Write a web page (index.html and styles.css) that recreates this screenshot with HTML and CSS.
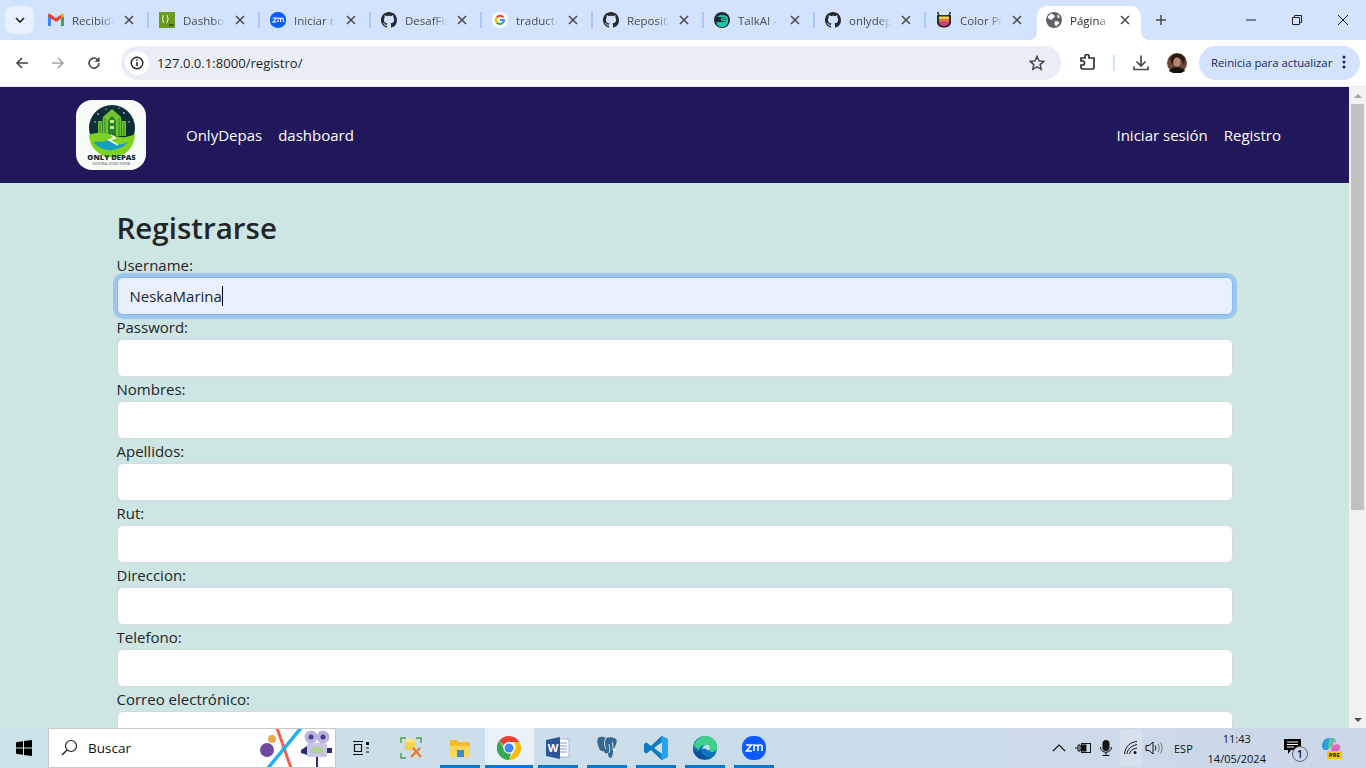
FILE: index.html
```html
<!DOCTYPE html>
<html lang="es">
<head>
  <meta charset="UTF-8" />
  <title>Registro - OnlyDepas</title>
  <link rel="stylesheet" href="styles.css">
</head>
<body>
  <svg class="defs" width="0" height="0">
    <symbol id="github" viewBox="0 0 16 16"><path fill="#24292f" d="M8 0C3.58 0 0 3.58 0 8c0 3.54 2.29 6.53 5.47 7.59.4.07.55-.17.55-.38 0-.19-.01-.82-.01-1.49-2.01.37-2.53-.49-2.69-.94-.09-.23-.48-.94-.82-1.13-.28-.15-.68-.52-.01-.53.63-.01 1.08.58 1.23.82.72 1.21 1.87.87 2.33.66.07-.52.28-.87.51-1.07-1.78-.2-3.64-.89-3.64-3.95 0-.87.31-1.59.82-2.15-.08-.2-.36-1.02.08-2.12 0 0 .67-.21 2.2.82.64-.18 1.32-.27 2-.27s1.36.09 2 .27c1.53-1.04 2.2-.82 2.2-.82.44 1.1.16 1.92.08 2.12.51.56.82 1.27.82 2.15 0 3.07-1.87 3.75-3.65 3.95.29.25.54.73.54 1.48 0 1.07-.01 1.93-.01 2.2 0 .21.15.46.55.38A8.01 8.01 0 0 0 16 8c0-4.42-3.58-8-8-8z"/></symbol>
    <symbol id="close" viewBox="0 0 10 10"><path d="M1 1l8 8M9 1L1 9" stroke="#474747" stroke-width="1.5" fill="none"/></symbol>
    <symbol id="zoom" viewBox="0 0 24 24"><rect width="24" height="24" rx="11" fill="#0b5cff"/><path d="M4 9h5.5L4.5 15H10M12 15v-6h.5M12.5 10.5c0-2 3.5-2 3.5 0V15M16 10.5c0-2 4-2 4 0V15" stroke="#fff" stroke-width="1.6" fill="none"/></symbol>
  </svg>

  <div class="tabstrip">
    <button class="tab-search"><svg width="10" height="6" viewBox="0 0 10 6"><path d="M1 1l4 4 4-4" stroke="#1f1f1f" stroke-width="1.6" fill="none"/></svg></button>

    <div class="tab">
      <svg class="favicon" viewBox="0 0 16 16"><path d="M0 3.5V14h3V6z" fill="#4285f4"/><path d="M16 3.5V14h-3V6z" fill="#34a853"/><path d="M0 2.500v2L8 10l8-5.500v-2L14.500 1.500 8 6 1.500 1.500z" fill="#ea4335"/><path d="M13 6l3-1.500v-2L14.500 1.500 13 2.600z" fill="#fbbc04"/></svg>
      <span class="tab-title">Recibidos</span>
      <svg class="tab-close"><use href="#close"/></svg>
    </div>
    <div class="tab">
      <svg class="favicon" viewBox="0 0 16 16"><rect width="16" height="16" fill="#6a9a23"/><path d="M6.500 4C5 4 6 8 4.500 8 6 8 5 12 6.500 12M9 4c1.500 0 .5 4 2 4-1.500 0-.5 4-2 4" stroke="#fff" stroke-width="1" fill="none" transform="translate(-1.500 -1)"/><path d="M10 13h4.500" stroke="#222" stroke-width="1.200"/></svg>
      <span class="tab-title">Dashboard</span>
      <svg class="tab-close"><use href="#close"/></svg>
    </div>
    <div class="tab">
      <svg class="favicon"><use href="#zoom"/></svg>
      <span class="tab-title">Iniciar reunión</span>
      <svg class="tab-close"><use href="#close"/></svg>
    </div>
    <div class="tab">
      <svg class="favicon"><use href="#github"/></svg>
      <span class="tab-title">DesafFinal</span>
      <svg class="tab-close"><use href="#close"/></svg>
    </div>
    <div class="tab">
      <svg class="favicon" viewBox="0 0 16 16"><circle cx="8" cy="8" r="8" fill="#fff"/><path d="M12.300 5A5 5 0 0 0 4 4.800L5.600 6.200A3 3 0 0 1 10.600 6z" fill="#ea4335"/><path d="M4 4.800a5 5 0 0 0 0 6.400l1.600-1.400a3 3 0 0 1 0-3.600z" fill="#fbbc04"/><path d="M4 11.200a5 5 0 0 0 7.300.5L9.800 10.300a3 3 0 0 1-4.200-.5z" fill="#34a853"/><path d="M13 7H8v2h2.800a2.500 2.500 0 0 1-1 1.300l1.500 1.400A5 5 0 0 0 13 7z" fill="#4285f4"/></svg>
      <span class="tab-title">traductor</span>
      <svg class="tab-close"><use href="#close"/></svg>
    </div>
    <div class="tab">
      <svg class="favicon"><use href="#github"/></svg>
      <span class="tab-title">Repositorio</span>
      <svg class="tab-close"><use href="#close"/></svg>
    </div>
    <div class="tab">
      <svg class="favicon" viewBox="0 0 16 16"><circle cx="8" cy="8" r="8" fill="#1c2b33"/><path d="M2 8c0-3 3-5 6-5s6 1 6 4v3c0 3-3 5-6 5-2 0-5-1-5-3z" fill="#19c9a8"/><rect x="1" y="5" width="11" height="5" rx="2" fill="#1c2b33"/><rect x="7" y="5.500" width="6" height="3.500" rx="1" fill="#19c9a8"/><circle cx="9" cy="7.200" r=".7" fill="#1c2b33"/><circle cx="11.300" cy="7.200" r=".7" fill="#1c2b33"/></svg>
      <span class="tab-title">TalkAI - Chat</span>
      <svg class="tab-close"><use href="#close"/></svg>
    </div>
    <div class="tab">
      <svg class="favicon"><use href="#github"/></svg>
      <span class="tab-title">onlydepas</span>
      <svg class="tab-close"><use href="#close"/></svg>
    </div>
    <div class="tab tab-narrow">
      <svg class="favicon" viewBox="0 0 16 16"><path d="M1.500 0l1.500 3M14.500 0L13 3" stroke="#2b2b2b" stroke-width="1.500"/><path d="M1 3h14v7c0 4-3 5.500-7 5.500S1 14 1 10z" fill="#2b2b2b"/><rect x="3" y="4.500" width="10" height="3" fill="#f7d23e"/><rect x="3" y="7.500" width="10" height="3" fill="#f2665a"/><path d="M3 10.500h10c0 2-2 3.500-5 3.500s-5-1.500-5-3.500z" fill="#d63a8a"/></svg>
      <span class="tab-title">Color Picker</span>
      <svg class="tab-close"><use href="#close"/></svg>
    </div>
    <div class="tab tab-active">
      <svg class="favicon" viewBox="0 0 16 16"><circle cx="8" cy="8" r="8" fill="#5f6368"/><path d="M5 1.500l3 1.500 1 2-2 1-1 2-3-1-1.500-2zM9 9l3.500.5.500 2-3 3-1.500-2.500zM12 2.500l2 3-2 .500-1-2z" fill="#fff"/></svg>
      <span class="tab-title">Página de registro</span>
      <svg class="tab-close"><use href="#close"/></svg>
    </div>
    <svg class="new-tab" width="12" height="12" viewBox="0 0 12 12"><path d="M6 1v10M1 6h10" stroke="#474747" stroke-width="1.500"/></svg>

    <div class="window-controls">
      <svg width="12" height="12" viewBox="0 0 12 12"><path d="M1 6h10" stroke="#1f1f1f"/></svg>
      <svg width="12" height="12" viewBox="0 0 12 12"><path d="M1.500 3.500h7v7h-7zM3.500 3.500v-2h7v7h-2" stroke="#1f1f1f" fill="none"/></svg>
      <svg width="12" height="12" viewBox="0 0 12 12"><path d="M1 1l10 10M11 1L1 11" stroke="#1f1f1f"/></svg>
    </div>
  </div>

  <div class="toolbar">
    <svg class="tool-icon" viewBox="0 0 16 16"><path d="M14 8H3M8 3L3 8l5 5" stroke="#474747" stroke-width="1.600" fill="none"/></svg>
    <svg class="tool-icon" viewBox="0 0 16 16"><path d="M2 8h11M8 3l5 5-5 5" stroke="#a3a6ab" stroke-width="1.600" fill="none"/></svg>
    <svg class="tool-icon" viewBox="0 0 16 16"><path d="M13 8a5 5 0 1 1-1.500-3.500L13 6" stroke="#474747" stroke-width="1.600" fill="none"/><path d="M13.500 1.800v5h-5z" fill="#474747"/></svg>
    <div class="omnibox">
      <span class="site-info"><svg width="14" height="14" viewBox="0 0 14 14"><circle cx="7" cy="7" r="5.800" stroke="#1f1f1f" stroke-width="1.400" fill="none"/><path d="M7 6v4.200" stroke="#1f1f1f" stroke-width="1.500"/><circle cx="7" cy="4.100" r=".9" fill="#1f1f1f"/></svg></span>
      <span class="url">127.0.0.1:8000/registro/</span>
      <svg class="star" width="16" height="16" viewBox="0 0 16 16"><path d="M8 1.500l2 4.400 4.700.5-3.500 3.200 1 4.700L8 11.900l-4.200 2.400 1-4.700L1.300 6.400 6 5.900z" stroke="#474747" stroke-width="1.500" fill="none"/></svg>
    </div>
    <svg class="ext-icon" width="18" height="18" viewBox="0 0 18 18"><path d="M2 5h4V3.500a2 2 0 0 1 4 0V5h5v9.500a1.500 1.500 0 0 1-1.500 1.500H3.500A1.500 1.500 0 0 1 2 14.500V12h1.500a2 2 0 0 0 0-4H2z" stroke="#303030" stroke-width="1.700" fill="none" transform="translate(0 -1)"/></svg>
    <span class="tool-sep"></span>
    <svg class="dl-icon" width="18" height="18" viewBox="0 0 18 18"><path d="M9 1.500v10M4.500 7.500L9 12l4.500-4.500M2 12.500v3h14v-3" stroke="#474747" stroke-width="1.700" fill="none"/></svg>
    <svg class="avatar" width="20" height="20" viewBox="0 0 20 20"><circle cx="10" cy="10" r="10" fill="#6b4a3a"/><path d="M3 5l4-4h7l4 4-1 7-3-6H7l-2 6z" fill="#2a1a14"/><ellipse cx="10" cy="9" rx="3.500" ry="4.500" fill="#b98468"/><path d="M2 18c2-5 14-5 16 0l-4 2H6z" fill="#17110f"/></svg>
    <div class="update-pill">
      <span>Reinicia para actualizar</span>
      <svg width="4" height="14" viewBox="0 0 4 14"><circle cx="2" cy="2" r="1.500" fill="#0b2a57"/><circle cx="2" cy="7" r="1.500" fill="#0b2a57"/><circle cx="2" cy="12" r="1.500" fill="#0b2a57"/></svg>
    </div>
  </div>

  <div class="viewport">
    <div class="page">
      <nav class="navbar">
        <svg class="logo" width="70" height="70" viewBox="0 0 70 70">
          <circle cx="36" cy="28" r="23" fill="#0d2f35"/>
          <circle cx="22" cy="14" r=".8" fill="#fff"/><circle cx="48" cy="13" r=".8" fill="#fff"/><circle cx="53" cy="22" r=".7" fill="#fff"/><circle cx="19" cy="22" r=".7" fill="#fff"/><circle cx="30" cy="9" r=".6" fill="#fff"/><circle cx="43" cy="8" r=".6" fill="#fff"/>
          <path d="M22 36V21h5v-4l9-8 9 8v4h5v15z" fill="#6fc52b"/>
          <path d="M32 36V20l4-4 4 4v16z" fill="#2a7d35"/>
          <path d="M24 22v14M26.500 19v17M29 18v18M43 18v18M45.500 19v17M48 22v14" stroke="#1f6a2d" stroke-width=".8"/>
          <path d="M34 20h4v3h-4zM34 26h4v3h-4z" fill="#c8f06a"/>
          <path d="M13 35c7-3 15-3 23 0s15 3 23-1a23 23 0 0 1-46 1z" fill="#7ed321"/>
          <path d="M17 42c7 0 13-1 18-2l4 4c5 1 10 0 14-3a23 23 0 0 1-36 1z" fill="#16a0c0"/>
          <path d="M35 35l4 3-6 2 9 5" stroke="#fff" stroke-width="1.500" fill="none"/>
          <text class="logo-title" x="35.500" y="60">ONLY DEPAS</text>
          <text class="logo-sub" x="35.500" y="64.500">YOUR REAL ESTATE PORTAL</text>
        </svg>
        <ul class="nav-links">
          <li><a href="#">OnlyDepas</a></li>
          <li><a href="#">dashboard</a></li>
        </ul>
        <ul class="nav-links nav-right">
          <li><a href="#">Iniciar sesión</a></li>
          <li><a href="#">Registro</a></li>
        </ul>
      </nav>

      <main class="container">
        <h2>Registrarse</h2>
        <form>
          <label>Username:</label>
          <div class="form-control autofilled"><span>NeskaMarina</span><i class="caret"></i></div>
          <label for="password">Password:</label>
          <input class="form-control" id="password" type="password">
          <label for="nombres">Nombres:</label>
          <input class="form-control" id="nombres" type="text">
          <label for="apellidos">Apellidos:</label>
          <input class="form-control" id="apellidos" type="text">
          <label for="rut">Rut:</label>
          <input class="form-control" id="rut" type="text">
          <label for="direccion">Direccion:</label>
          <input class="form-control" id="direccion" type="text">
          <label for="telefono">Telefono:</label>
          <input class="form-control" id="telefono" type="text">
          <label for="correo">Correo electrónico:</label>
          <input class="form-control" id="correo" type="email">
        </form>
      </main>
    </div>

    <div class="scrollbar">
      <span class="arrow arrow-up"></span>
      <div class="scroll-track"><div class="scroll-thumb"></div></div>
      <span class="arrow arrow-down"></span>
    </div>
  </div>

  <div class="taskbar">
    <svg class="win-logo" width="16" height="16" viewBox="0 0 16 16"><path d="M0 2.200l7-1v6.400H0zM8 1l8-1v7.600H8zM0 8.400h7v6.400l-7-1zM8 8.400h8V16l-8-1.100z" fill="#000"/></svg>
    <div class="search-box">
      <svg width="18" height="18" viewBox="0 0 18 18"><circle cx="11" cy="7" r="5.500" stroke="#1f1f1f" stroke-width="1.200" fill="none"/><path d="M7 11l-5 5" stroke="#1f1f1f" stroke-width="1.400"/></svg>
      <span>Buscar</span>
      <svg class="search-art" width="75" height="40" viewBox="0 0 75 40">
        <circle cx="7" cy="22" r="7" fill="#6d4a9e"/><circle cx="12" cy="11" r="4" fill="#e9a94b"/>
        <path d="M17 0l14 40" stroke="#f0604d" stroke-width="3"/><path d="M41 0L8 40" stroke="#1fb0ee" stroke-width="3.500"/>
        <g transform="translate(6 0)">
          <circle cx="45" cy="9" r="6.500" fill="#b9b4dc"/><circle cx="57" cy="9" r="6.500" fill="#b9b4dc"/>
          <circle cx="45" cy="9" r="2.500" fill="#3f3f8f"/><circle cx="57" cy="9" r="2.500" fill="#3f3f8f"/>
          <rect x="41" y="15" width="20" height="14" rx="2" fill="#c9c5e6"/><rect x="45" y="19" width="12" height="6" fill="#a9d39a"/>
          <path d="M41 18l-6 4v3l6 2zM61 20h5v5h-5z" fill="#2c2c6e"/><path d="M51 29v11" stroke="#2c2c6e" stroke-width="2"/>
        </g>
      </svg>
    </div>

    <div class="task-slot task-view"><svg width="18" height="18" viewBox="0 0 18 18"><path d="M2 2.500h10M2 15.500h10M3.500 5.500h7v7h-7zM15 9h3M15 13h3" stroke="#111" stroke-width="1.200" fill="none"/><rect x="15" y="3" width="3" height="3" fill="#111"/></svg></div>
    <div class="task-slot"><svg width="24" height="24" viewBox="0 0 24 24"><path d="M2 7V2h5M22 7V2h-5M2 17v5h5" stroke="#4ba34b" stroke-width="1.500" fill="none"/><path d="M6 4h10v10H6z" fill="#f4d24c"/><ellipse cx="11" cy="4.500" rx="5" ry="2" fill="#f9e58d"/><path d="M12 21l9-9M14 12l8 9" stroke="#ec7a25" stroke-width="2.400"/></svg></div>
    <div class="task-slot is-open"><svg width="22" height="20" viewBox="0 0 22 20"><path d="M1 3a1 1 0 0 1 1-1h6l2 2h10a1 1 0 0 1 1 1v13a1 1 0 0 1-1 1H2a1 1 0 0 1-1-1z" fill="#f5b92e"/><path d="M1 8h20v10a1 1 0 0 1-1 1H2a1 1 0 0 1-1-1z" fill="#fbd75b"/><path d="M8 12h7v7H8z" fill="#2f8ed4"/></svg></div>
    <div class="task-slot is-open is-active"><svg width="24" height="24" viewBox="0 0 24 24"><path d="M12 0a12 12 0 0 1 10.400 6H12a6 6 0 0 0-5.600 3.800L2.500 4.500A12 12 0 0 1 12 0z" fill="#ea4335"/><path d="M22.400 6a12 12 0 0 1-10.400 18l5.200-9a6 6 0 0 0-.700-9z" fill="#fbbc04"/><path d="M12 24A12 12 0 0 1 2.500 4.500l4.900 9a6 6 0 0 0 6.800 3.700z" fill="#34a853"/><circle cx="12" cy="12" r="5.600" fill="#fff"/><circle cx="12" cy="12" r="4.500" fill="#4285f4"/></svg></div>
    <div class="task-slot is-open"><svg width="24" height="22" viewBox="0 0 24 22"><rect x="8" y="2" width="15" height="18" fill="#fff" stroke="#9db4d6"/><path d="M13 6h8M13 9h8M13 12h8M13 15h8" stroke="#7f99c4"/><path d="M0 3l14-3v22L0 19z" fill="#2b579a"/><text class="word-w" x="7" y="14.500">W</text></svg></div>
    <div class="task-slot is-open"><svg width="24" height="24" viewBox="0 0 24 24"><path d="M3 2c3-2 6-1 8 0 3-1 7-1 10 1 2 3-1 8-3 11 0 3 0 6-2 8-2 0-3-2-3-5-2 1-4 0-4-2-3 1-5-2-6-6C2 6 2 4 3 2z" fill="#336791"/><path d="M11 2c-2 3-2 7 0 11M14 8c1 4 1 6 0 9M18 14c2 0 3 0 3-1M17 6c1 2 1 5 1 8" stroke="#fff" stroke-width=".8" fill="none"/></svg></div>
    <div class="task-slot is-open"><svg width="24" height="24" viewBox="0 0 24 24"><path d="M17.500 0L24 3v18l-6.500 3L7 14l-4.500 3.500L0 16V8l2.500-1.500L7 10z" fill="#0a7ac4"/><path d="M17.500 0L24 3v18l-6.500 3V0z" fill="#27a4ee"/><path d="M18 6L10 12l8 6z" fill="#cbe0ea"/></svg></div>
    <div class="task-slot is-open"><svg width="24" height="24" viewBox="0 0 24 24"><circle cx="12" cy="12" r="12" fill="#0f76bd"/><path d="M1 10C3 2 9 0 13 0c6 0 11 5 11 11 0 3-2 5-5 5-2 0-3-1-3-2 1-2 0-5-4-5-4 0-6 3-6 5L1 10z" fill="#3fd08a"/><path d="M8 14c0 4 4 7 8 7 3 0 5-1 7-4-3 3-8 6-13 6C4 23 0 18 0 12c1 2 3 5 8 2z" fill="#124f9c"/><path d="M9.500 13c0-3 2-4 4-4 3 0 4 2 3 4.500-2 1.500-3 .5-3-.5-2-1-3 0-4 0z" fill="#cde2ea"/></svg></div>
    <div class="task-slot is-open"><svg width="24" height="24"><use href="#zoom"/></svg></div>

    <div class="tray">
      <svg class="tray-chevron" width="14" height="8" viewBox="0 0 14 8"><path d="M1 7l6-6 6 6" stroke="#111" stroke-width="1.200" fill="none"/></svg>
      <svg class="tray-battery" width="16" height="12" viewBox="0 0 16 12"><path d="M0 6h3M3 3h2v6H3zM5 4h1M5 8h1" stroke="#111" fill="none"/><rect x="6.500" y="1.500" width="9" height="9" fill="none" stroke="#111"/><rect x="6.500" y="2.500" width="5" height="7" fill="#111"/></svg>
      <svg class="tray-mic" width="12" height="16" viewBox="0 0 12 16"><rect x="2.500" y="0" width="7" height="11" rx="3.500" fill="#111"/><path d="M.5 7c0 7 11 7 11 0M6 12v3M2.500 15.500h7" stroke="#111" fill="none"/></svg>
      <span class="tray-wifi"><svg width="14" height="14" viewBox="0 0 14 14"><path d="M.500 13C1 6 6 1 13 .5M3 13c.500-5 4-8 10-9.500M5.500 13c.500-3 3-5 7.500-6" stroke="#111" fill="none"/><circle cx="11" cy="11.500" r="1.500" fill="#111"/></svg></span>
      <svg class="tray-volume" width="18" height="14" viewBox="0 0 18 14"><path d="M1 4.500h3L8 1v12L4 9.500H1z" stroke="#111" fill="none"/><path d="M10 4.500c1 1.500 1 3.500 0 5" stroke="#111" fill="none"/><path d="M13 3c1.500 2.500 1.500 5.500 0 8M15.500 1.500c2 3 2 8 0 11" stroke="#777" fill="none"/></svg>
      <span class="tray-lang">ESP</span>
      <div class="clock"><span>11:43</span><span>14/05/2024</span></div>
      <div class="notif">
        <svg width="17" height="15" viewBox="0 0 17 15"><path d="M0 0h17v11H7l-3 4v-4H0z" fill="#000"/><path d="M3 3h11M3 5.500h11M3 8h7" stroke="#fff"/></svg>
        <span class="notif-badge">1</span>
      </div>
      <div class="copilot">
        <svg width="20" height="18" viewBox="0 0 20 18"><path d="M1 9c0-5 3-8 7-8h5l-3 5-3 7H4c-2 0-3-2-3-4z" fill="#2d9fe0"/><path d="M8 1h4c2 0 3 2 3 4l-5 5-3 3z" fill="#57c6a6"/><path d="M11 7h6c2 1 3 3 2 5l-3 3h-6z" fill="#d867c7"/><path d="M12 5l3 0 2 2-5 2z" fill="#f4a6d8"/></svg>
        <span class="pre-tag">PRE</span>
      </div>
    </div>
  </div>
</body>
</html>
```

FILE: styles.css
```css
:root {
  --ui-font: "Open Sans", "Noto Sans", Arial, sans-serif;
  --strip-bg: #d3e3fd;
  --navbar-bg: #21175b;
  --page-bg: #cee6e3;
}

* {
  box-sizing: border-box;
}

html, body {
  height: 100%;
}

body {
  margin: 0;
  display: flex;
  flex-direction: column;
  overflow: hidden;
  font-family: var(--ui-font);
  color: #212529;
  background-color: #fff;
}

.defs {
  position: absolute;
}

/* tabs */
.tabstrip {
  height: 40px;
  flex: none;
  display: flex;
  background-color: var(--strip-bg);
  font-size: 11.5px;
  color: #474b50;
}

.tab-search {
  width: 29px;
  height: 28px;
  margin: 6px 3px 0 5px;
  padding: 0;
  border: none;
  border-radius: 8px;
  background-color: #e8f0fd;
  display: flex;
  align-items: center;
  justify-content: center;
}

.tab {
  position: relative;
  width: 111px;
  height: 34px;
  margin-top: 6px;
  padding: 0 0 6px 11px;
  display: flex;
  align-items: center;
  flex: none;
}

.tab::after {
  content: "";
  position: absolute;
  right: -1px;
  top: 6px;
  width: 2px;
  height: 16px;
  background-color: #a8c7fa;
}

.tab-narrow::after {
  display: none;
}

.favicon {
  width: 16px;
  height: 16px;
  flex: none;
}

.tab-title {
  width: 42px;
  margin-left: 8px;
  overflow: hidden;
  white-space: nowrap;
  -webkit-mask-image: linear-gradient(to right, #000 70%, transparent);
  mask-image: linear-gradient(to right, #000 70%, transparent);
}

.tab-close {
  width: 10px;
  height: 10px;
  margin-left: 10px;
  flex: none;
}

.tab-active {
  width: 104px;
  margin-left: 1px;
  padding-left: 9px;
  background-color: #fff;
  border-radius: 10px 10px 0 0;
  color: #2b2b2b;
}

/* the little curves where the active tab meets the toolbar */
.tab-active::before,
.tab-active::after {
  content: "";
  position: absolute;
  top: auto;
  bottom: 0;
  width: 8px;
  height: 8px;
  background-color: transparent;
}

.tab-active::before {
  left: -8px;
  border-bottom-right-radius: 8px;
  box-shadow: 2px 2px 0 2px #fff;
}

.tab-active::after {
  right: -8px;
  border-bottom-left-radius: 8px;
  box-shadow: -2px 2px 0 2px #fff;
}

.tab-active .tab-title {
  width: 40px;
}

.new-tab {
  flex: none;
  margin: 14px 0 0 14px;
}

.window-controls {
  margin-left: auto;
  width: 138px;
  display: flex;
  justify-content: space-between;
  padding: 14px 17px 0;
}

/* toolbar */
.toolbar {
  height: 47px;
  flex: none;
  display: flex;
  align-items: flex-start;
  padding: 6px 0 0 14px;
  background-color: #fff;
  border-bottom: 1px solid #e6e6e6;
}

.tool-icon {
  width: 16px;
  height: 16px;
  margin: 9px 20px 0 0;
  flex: none;
}

.omnibox {
  width: 940px;
  height: 34px;
  margin-left: -1px;
  display: flex;
  align-items: center;
  padding: 0 16px 0 4px;
  border-radius: 17px;
  background-color: #e9eef6;
  font-size: 13.1px;
}

.site-info {
  width: 24px;
  height: 24px;
  border-radius: 50%;
  background-color: #fff;
  display: flex;
  align-items: center;
  justify-content: center;
}

.url {
  margin-left: 8px;
  color: #1f1f1f;
}

.star {
  margin-left: auto;
}

.ext-icon {
  margin: 8px 0 0 18px;
}

.tool-sep {
  width: 2px;
  height: 16px;
  margin: 9px 0 0 16px;
  background-color: #d3e3fd;
}

.dl-icon {
  margin: 8px 0 0 17px;
}

.avatar {
  margin: 7px 0 0 17px;
}

.update-pill {
  width: 161px;
  height: 34px;
  margin-left: 12px;
  padding: 0 14px 2px 12px;
  display: flex;
  align-items: center;
  justify-content: space-between;
  border-radius: 17px;
  background-color: var(--strip-bg);
  color: #0b2a57;
  font-size: 11.3px;
  white-space: nowrap;
}

/* page */
.viewport {
  flex: 1;
  min-height: 0;
  display: flex;
}

.page {
  flex: 1;
  min-width: 0;
  overflow: hidden;
  background-color: var(--page-bg);
}

.navbar {
  height: 96px;
  display: flex;
  align-items: center;
  padding: 0 68px 0 76px;
  background-color: var(--navbar-bg);
}

.logo {
  flex: none;
  border-radius: 16px;
  background-color: #f6fbf8;
}

.logo-title {
  font-family: "Open Sans", Arial, sans-serif;
  font-size: 7.600px;
  font-weight: 800;
  text-anchor: middle;
  fill: #14272e;
}

.logo-sub {
  font-family: "Open Sans", Arial, sans-serif;
  font-size: 3px;
  text-anchor: middle;
  fill: #3b4a50;
}

.word-w {
  font-family: "Open Sans", Arial, sans-serif;
  font-size: 11px;
  font-weight: 700;
  text-anchor: middle;
  fill: #fff;
}

.nav-links {
  display: flex;
  gap: 16px;
  margin: 0 0 0 40px;
  padding: 0;
  list-style: none;
  font-size: 15px;
}

.nav-links a {
  color: #fff;
  text-decoration: none;
}

.nav-right {
  margin-left: auto;
}

.container {
  width: 1140px;
  margin: 0 auto;
  padding: 26px 12px 0;
}

h2 {
  margin: 0 0 6px;
  font-size: 29.500px;
  font-weight: 600;
  line-height: 38px;
}

label {
  display: block;
  height: 24px;
  font-size: 15px;
  line-height: 24px;
}

.form-control {
  display: block;
  width: 100%;
  height: 38px;
  padding: 6px 12px;
  border: 1px solid #d6dadd;
  border-radius: 6px;
  background-color: #fff;
  font-family: var(--ui-font);
  font-size: 15px;
  line-height: 24px;
  color: #212529;
}

.autofilled {
  display: flex;
  align-items: center;
  border-color: #86b7fe;
  background-color: #e8f0fe;
  box-shadow: 0 0 0 4px rgba(13, 110, 253, 0.25);
}

.caret {
  width: 1px;
  height: 20px;
  background-color: #000;
}

/* scrollbar */
.scrollbar {
  width: 17px;
  flex: none;
  display: flex;
  flex-direction: column;
  background-color: #f1f1f1;
}

.arrow {
  height: 17px;
  flex: none;
  display: flex;
  align-items: center;
  justify-content: center;
}

.arrow::before {
  content: "";
  border-left: 4px solid transparent;
  border-right: 4px solid transparent;
}

.arrow-up::before {
  border-bottom: 4px solid #a3a3a3;
}

.arrow-down::before {
  border-top: 4px solid #505050;
}

.scroll-track {
  flex: 1;
  padding: 0 2px;
}

.scroll-thumb {
  height: 406px;
  background-color: #c1c1c1;
}

/* taskbar */
.taskbar {
  height: 40px;
  flex: none;
  display: flex;
  background: linear-gradient(to right, #cbe2ea, #cbd7e8);
  font-size: 12px;
  color: #111;
}

.win-logo {
  margin: 12px 16px 0 16px;
  flex: none;
}

.search-box {
  position: relative;
  width: 288px;
  flex: none;
  display: flex;
  align-items: center;
  gap: 10px;
  padding-left: 11px;
  background-color: #fff;
  border: 1px solid #c9c9c9;
  overflow: hidden;
  font-size: 13.500px;
}

.search-art {
  position: absolute;
  right: 0;
  top: -1px;
}

.task-slot {
  position: relative;
  width: 49px;
  flex: none;
  padding-right: 1px;
  display: flex;
  align-items: center;
  justify-content: center;
}

.task-view {
  width: 51px;
  padding-right: 4px;
}

.is-open::after {
  content: "";
  position: absolute;
  left: 4px;
  right: 5px;
  bottom: 0;
  height: 3px;
  background-color: #0078d4;
}

.is-active {
  background-color: #e8f1f8;
}

.is-active::after {
  left: 0;
  right: 1px;
}

.tray {
  margin-left: auto;
  width: 315px;
  display: flex;
  align-items: center;
}

.tray-chevron {
  margin-left: 1px;
}

.tray-battery {
  margin-left: 9px;
}

.tray-mic {
  margin-left: 9px;
}

.tray-wifi {
  width: 22px;
  height: 38px;
  margin-left: 8px;
  background-color: #d5e0ec;
  display: flex;
  align-items: center;
  justify-content: center;
}

.tray-volume {
  margin-left: 3px;
}

.tray-lang {
  margin-left: 11px;
  font-size: 11px;
}

.clock {
  width: 70px;
  margin-left: 9px;
  display: flex;
  flex-direction: column;
  align-items: center;
  gap: 5px;
  font-size: 11px;
  line-height: 15px;
}

.notif {
  position: relative;
  margin-left: 12px;
  width: 20px;
  height: 18px;
}

.notif-badge {
  position: absolute;
  left: 8px;
  top: 7px;
  width: 16px;
  height: 16px;
  border: 1px solid #666;
  border-radius: 50%;
  background-color: #cbd7e8;
  font-size: 10px;
  font-weight: 600;
  line-height: 14px;
  text-align: center;
}

.copilot {
  position: relative;
  width: 20px;
  height: 22px;
  margin-left: 17px;
}

.pre-tag {
  position: absolute;
  right: -1px;
  bottom: 0;
  padding: 0 2px;
  border-radius: 2px;
  background-color: #ffc600;
  font-size: 6px;
  font-weight: 700;
  line-height: 8px;
}
```
